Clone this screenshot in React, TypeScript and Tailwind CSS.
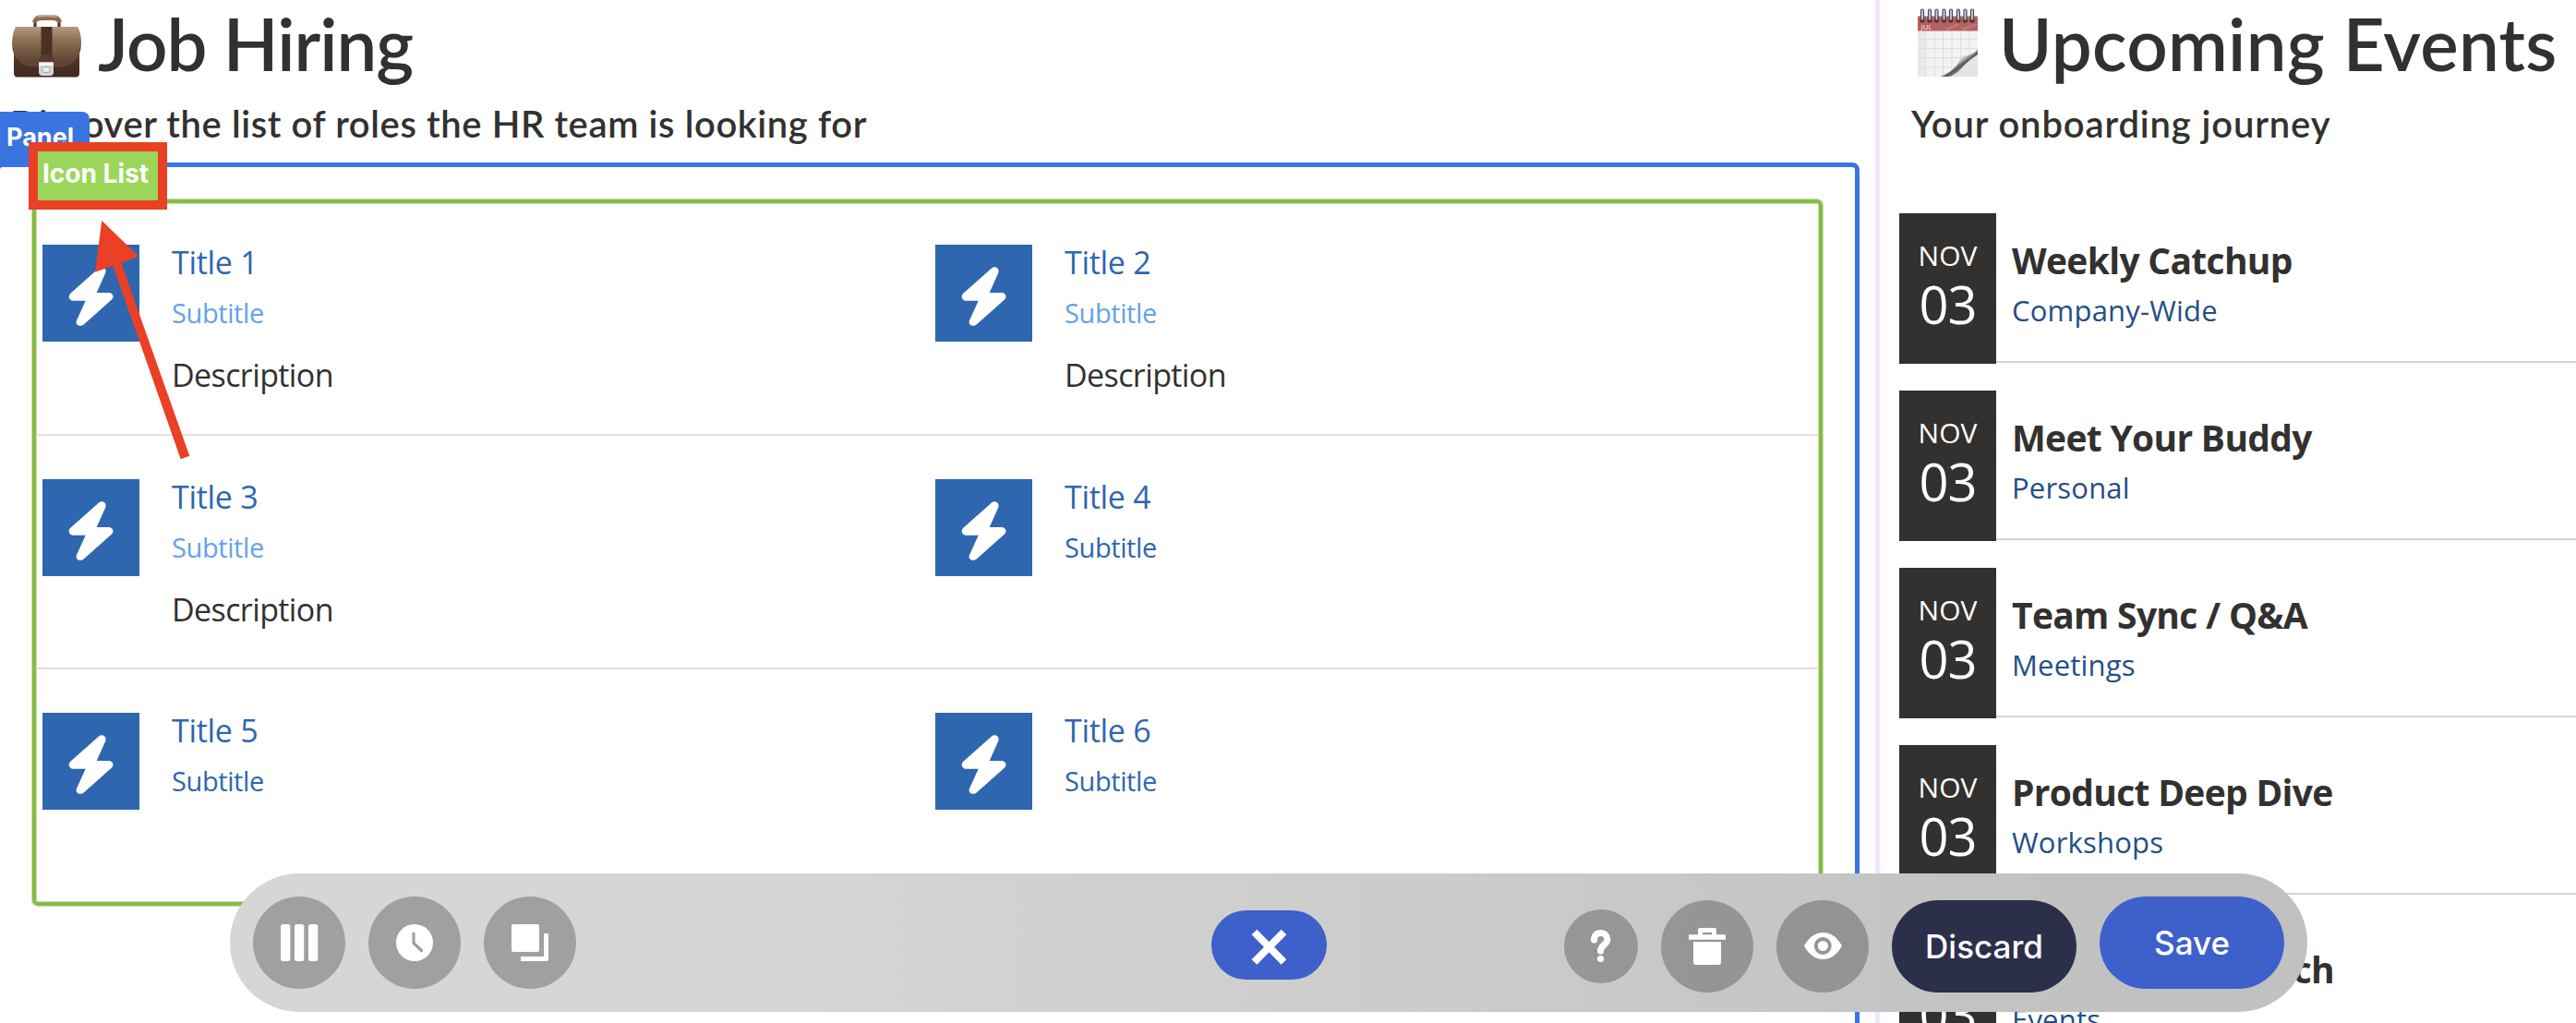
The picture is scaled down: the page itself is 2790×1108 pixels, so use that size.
import { ReactNode } from "react";

type ListItem = {
  title: string;
  description?: string;
  lightSubtitle?: boolean;
};

const rows: ListItem[][] = [
  [
    { title: "Title 1", description: "Description", lightSubtitle: true },
    { title: "Title 2", description: "Description", lightSubtitle: true },
  ],
  [
    { title: "Title 3", description: "Description", lightSubtitle: true },
    { title: "Title 4" },
  ],
  [{ title: "Title 5" }, { title: "Title 6" }],
];

const events = [
  { title: "Weekly Catchup", category: "Company-Wide" },
  { title: "Meet Your Buddy", category: "Personal" },
  { title: "Team Sync / Q&A", category: "Meetings" },
  { title: "Product Deep Dive", category: "Workshops" },
  { title: "Onboarding Lunch", category: "Events" },
];

const rings = [5, 13, 20.5, 28.5, 36, 44, 51.5, 59];

function Briefcase() {
  return (
    <svg width="76" height="74" viewBox="0 0 76 74" className="shrink-0">
      <defs>
        <linearGradient id="leather" x1="0" y1="0" x2="0" y2="1">
          <stop offset="0" stopColor="#b39a80" />
          <stop offset="0.4" stopColor="#86694f" />
          <stop offset="1" stopColor="#563a2c" />
        </linearGradient>
        <linearGradient id="leatherBody" x1="0" y1="0" x2="0" y2="1">
          <stop offset="0" stopColor="#5d4032" />
          <stop offset="1" stopColor="#412820" />
        </linearGradient>
      </defs>
      <path d="M25 20V14Q25 11 28 10H48Q51 11 51 14V20" fill="none" stroke="#3f2f28" strokeWidth="3" />
      <path d="M22 14Q24 6.500 30 6.500H46Q52 6.500 54 14L50 15Q48 12 44 12H32Q28 12 26 15Z" fill="#8c6a54" />
      <path d="M27 8.500Q38 6.500 49 8.500" fill="none" stroke="#c8a286" strokeWidth="1.500" />
      <path d="M2 36H73V69Q73 73.500 69 73.500H6Q2 73.500 2 69Z" fill="url(#leatherBody)" />
      <path d="M4 19H71Q75 26 75 36Q75 60 52 63H24Q1 60 0 38Q0 26 4 19Z" fill="url(#leather)" />
      <path d="M1 42Q4 59 24 61H52Q71 59 74 42" fill="none" stroke="#6b4c3b" strokeWidth="1" />
      <path d="M31.500 19H43.500V50H31.500Z" fill="#4b3123" />
      <path d="M29 63V56Q29 49 37.500 49Q46 49 46 56V63Z" fill="#583b2e" />
      <path d="M29 57.500H45V68Q45 72 41 72H33Q29 72 29 68Z" fill="#d5d5d5" />
      <path d="M29 57.500H45V61H29Z" fill="#f5f5f5" />
      <rect x="33" y="62.500" width="8" height="6" rx="2" fill="#ececec" stroke="#a9a9a9" />
    </svg>
  );
}

function Calendar() {
  return (
    <svg width="65" height="75" viewBox="0 0 65 75" className="shrink-0">
      <defs>
        <linearGradient id="curl" x1="0.35" y1="0.35" x2="0.8" y2="0.8">
          <stop offset="0" stopColor="#fdfdfd" />
          <stop offset="0.3" stopColor="#c4c4c4" />
          <stop offset="0.5" stopColor="#555" />
          <stop offset="1" stopColor="#e6e6e6" />
        </linearGradient>
      </defs>
      <rect x="0" y="24" width="65" height="50" fill="#f3f3f3" />
      <rect x="0" y="24" width="9" height="50" fill="#e9e9e9" />
      <path d="M9 24V74M18.500 24V74M27.500 24V74M37 24V74M46.500 24V74M56 24V56M0 33.500H65M0 43.500H65M0 53.500H58M0 64H44" stroke="#dedede" strokeWidth="1" />
      <path d="M65 48Q60 52 47 52Q44 66 27 74H65Z" fill="#e4e4e4" />
      <path d="M65 44Q61 51 47 52Q43 67 24 74H34Q42 72 50 62Q57 55 65 50Z" fill="url(#curl)" />
      <rect x="0" y="8.500" width="65" height="16" fill="#b5615f" />
      <path d="M31 22.500L45 17.500M49 22.500L63 17.500" stroke="#c58583" strokeWidth="3" strokeDasharray="1.500 1" />
      <text x="3.500" y="23" fontSize="8" fill="#f4e4e4" fontFamily="Open Sans, sans-serif">JUL</text>
      {rings.map((x) => (
        <g key={x}>
          <circle cx={x} cy="13" r="2.600" fill="#5a2f33" />
          <rect x={x - 1.5} y="1" width="3" height="12" rx="1.500" fill="#c3d2de" stroke="#454a55" strokeWidth="1.200" />
        </g>
      ))}
    </svg>
  );
}

function Bolt() {
  return (
    <svg viewBox="0 0 105 105" className="size-[105px] shrink-0 bg-[#2f66b0]" fill="#fff">
      <path d="M61 25.500C64.500 22.500 70 25.500 68.300 30.500L58.700 52H72C76.300 52.300 78 56.500 75 59.500L44.700 86.500C41 89.500 35 87 37 82L46.700 60.700H33C29 60.400 27.300 56 30 53Z" />
    </svg>
  );
}

function IconListItem({ title, description, lightSubtitle }: ListItem) {
  return (
    <div className="flex w-[967px] shrink-0 gap-[35px] last:w-[900px]">
      <Bolt />
      <div className="-mt-[3px]">
        <p className="text-[34px] leading-[44px] tracking-[-0.3px] text-[#2f66b0]">{title}</p>
        <p
          className={`mt-[13px] text-[29px] leading-[40px] tracking-[-0.4px] ${
            lightSubtitle ? "text-[#64a2ec]" : "text-[#2f66b0]"
          }`}
        >
          Subtitle
        </p>
        {description && (
          <p className="mt-[25px] text-[34px] leading-[44px] tracking-[-0.6px]">{description}</p>
        )}
      </div>
    </div>
  );
}

function EventCard({ title, category }: { title: string; category: string }) {
  return (
    <div className="flex h-[163px] shrink-0">
      <div className="w-[105px] bg-[#32312f] pt-[26px] text-center text-white">
        <p className="text-[30px] leading-[40px]">NOV</p>
        <p className="mt-[2px] text-[56px] leading-[60px] tracking-[-1px]">03</p>
      </div>
      <div className="h-[162px] flex-1 border-b-2 border-[#d4d4d4] pt-[26px] pl-[17px]">
        <p className="text-[39px] leading-[50px] font-bold tracking-[-0.7px]">{title}</p>
        <p className="mt-[9px] text-[31px] leading-[40px] tracking-[0.2px] text-[#244e87]">{category}</p>
      </div>
    </div>
  );
}

function RoundButton({ children }: { children: ReactNode }) {
  return (
    <button className="size-[100px] rounded-full bg-black/25">
      <svg viewBox="0 0 100 100" fill="#fff">
        {children}
      </svg>
    </button>
  );
}

function Toolbar() {
  return (
    <div className="absolute top-[946px] left-[249px] flex h-[150px] w-[2250px] rounded-full bg-linear-to-r from-[#d6d6d4] from-25% via-[#cecfcc] via-50% to-[#c1c1c1] to-90% pt-[25px] pl-[25px] font-['Inter',sans-serif]">
      <div className="flex gap-[25px]">
        <RoundButton>
          <rect x="30" y="30" width="10.300" height="40" rx="2.500" />
          <rect x="45" y="30" width="10.300" height="40" rx="2.500" />
          <rect x="60" y="30" width="10.300" height="40" rx="2.500" />
        </RoundButton>
        <RoundButton>
          <circle cx="50" cy="50" r="20" />
          <path d="M49 40V50.500L57.500 58.500" fill="none" stroke="#a0a09e" strokeWidth="3.200" strokeLinecap="round" strokeLinejoin="round" />
        </RoundButton>
        <RoundButton>
          <rect x="30" y="30" width="30" height="30" rx="2" />
          <path d="M65 40H70V68A2 2 0 0 1 68 70H40V65H65Z" />
        </RoundButton>
      </div>
      <button className="mt-[15px] ml-[688px] h-[75px] w-[125px] rounded-full bg-[#3e60cb]">
        <svg viewBox="0 0 125 75" fill="none" stroke="#fff" strokeWidth="8">
          <path d="M46.500 23.500L78.500 56M78.500 23.500L46.500 56" />
        </svg>
      </button>
      <button className="mt-[14px] ml-[257px] size-[80px] rounded-full bg-black/25">
        <svg viewBox="0 0 80 80" fill="none">
          <path d="M32.500 33C32.500 28 35.500 25.500 39.700 25.500C44 25.500 46.800 28.500 46.800 32.500C46.800 38.500 39.500 38.500 39.500 45" stroke="#fff" strokeWidth="7" strokeLinecap="round" />
          <circle cx="39.500" cy="53.500" r="3.600" fill="#fff" />
        </svg>
      </button>
      <div className="mt-[4px] ml-[25px] flex gap-[25px]">
        <RoundButton>
          <path d="M30 37.300H40V32Q40 30 42 30H58Q60 30 60 32V37.300H70V42.700H30ZM45 35V37.300H55V35Z" fillRule="evenodd" />
          <path d="M35 45H65V67Q65 70 62 70H38Q35 70 35 67Z" />
        </RoundButton>
        <RoundButton>
          <path d="M30 49.500Q38 35 50.500 35Q63 35 71 49.500Q63 64 50.500 64Q38 64 30 49.500Z" />
          <circle cx="50.300" cy="49.500" r="7.500" fill="none" stroke="#959594" strokeWidth="3.800" />
        </RoundButton>
        <button className="h-[100px] w-[200px] rounded-full bg-[#2c2f49] text-[35px] font-medium text-white">
          Discard
        </button>
      </div>
      <button className="ml-[25px] h-[100px] w-[200px] rounded-full bg-[#3e60cb] text-[35px] font-medium text-white">
        Save
      </button>
    </div>
  );
}

export default function App() {
  return (
    <div className="relative flex h-[1108px] w-[2790px] overflow-hidden bg-white font-['Open_Sans',sans-serif] text-[#32312f]">
      {/* Left column */}
      <div className="w-[2031px] shrink-0">
        <h1 className="flex h-[92px] pt-[10px] pl-[13px]">
          <Briefcase />
          <span className="-mt-[9px] ml-[17px] font-['Lato',sans-serif] text-[78px] leading-[92px] font-semibold tracking-[-1px]">
            Job Hiring
          </span>
        </h1>
        <p className="mt-[17px] pl-[11px] font-['Lato',sans-serif] text-[40px] leading-[50px] font-semibold tracking-[0.6px] whitespace-nowrap">
          Discover the list of roles the HR team is looking for
        </p>

        {/* Panel frame, runs off the left and bottom edges */}
        <div className="mt-[17px] -ml-[5px] h-[960px] w-[2019px] rounded-[8px] border-[5px] border-[#3a74e0] pt-[35px] pl-[35px]">
          <div className="h-[765px] w-[1939px] rounded-[6px] border-4 border-[#88bb45] ring-1 inset-ring-1 ring-[#c9e1ab] inset-ring-[#c9e1ab]">
            <div className="flex h-[252px] border-b-2 border-[#e0e0e0] pt-[45px] pl-[7px]">
              {rows[0].map((item) => <IconListItem key={item.title} {...item} />)}
            </div>
            <div className="flex h-[253px] border-b-2 border-[#e0e0e0] pt-[47px] pl-[7px]">
              {rows[1].map((item) => <IconListItem key={item.title} {...item} />)}
            </div>
            <div className="flex pt-[47px] pl-[7px]">
              {rows[2].map((item) => <IconListItem key={item.title} {...item} />)}
            </div>
          </div>
        </div>
      </div>

      {/* Right column */}
      <div className="flex-1 border-l-[5px] border-[#f3e3fd]">
        <h1 className="flex h-[92px] pt-[9px] pl-[41px]">
          <Calendar />
          <span className="-mt-[8px] ml-[23px] font-['Lato',sans-serif] text-[78px] leading-[92px] font-semibold tracking-[0.3px] whitespace-nowrap">
            Upcoming Events
          </span>
        </h1>
        <p className="mt-[17px] pl-[34px] font-['Lato',sans-serif] text-[40px] leading-[50px] font-semibold tracking-[0.85px]">
          Your onboarding journey
        </p>
        <div className="mt-[72px] flex flex-col gap-[29px] pl-[21px]">
          {events.map((event) => <EventCard key={event.title} {...event} />)}
        </div>
      </div>

      {/* Selection labels */}
      <div className="absolute top-[121px] left-0 h-[60px] w-[97px] rounded-tr-[8px] bg-[#3a74e0] pt-[8px] pl-[7px] font-['Inter',sans-serif] text-[27px] leading-[40px] font-bold text-white">
        Panel
      </div>
      <div className="absolute top-[154px] left-[31px] h-[73px] w-[150px] border-[10px] border-[#ea4025] bg-[#9bd65a] pt-[4px] pl-[5px] font-['Inter',sans-serif] text-[28px] leading-[40px] font-bold whitespace-nowrap text-white">
        Icon List
      </div>
      <svg className="absolute top-[230px] left-[90px]" width="130" height="280" viewBox="90 230 130 280" fill="#ea4025">
        <path d="M110.300 239L150.300 277.700L131.300 284.700L205.300 493.700L195.700 497.300L122.300 287.700L103 294.700Z" />
      </svg>

      <Toolbar />
    </div>
  );
}
